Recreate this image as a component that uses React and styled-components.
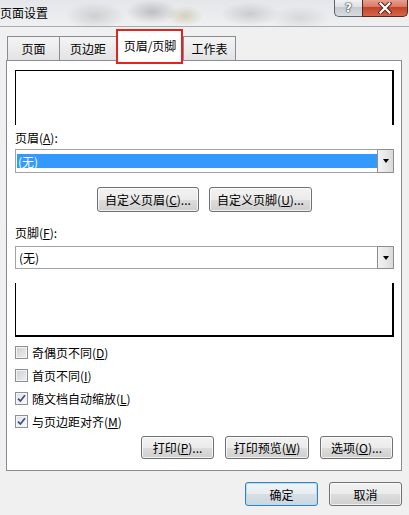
import React from 'react';
import styled, { createGlobalStyle, css } from 'styled-components';

const GlobalStyle = createGlobalStyle`
  html, body {
    margin: 0;
    padding: 0;
    background: #f0f0f0;
  }
  body {
    font-family: "Noto Sans CJK SC", "Noto Sans", sans-serif;
    font-size: 12px;
    color: #000;
    overflow: hidden;
  }
  u {
    text-decoration: underline;
    text-underline-offset: 1px;
  }
`;

const Window = styled.div`
  display: flex;
  flex-direction: column;
  width: 409px;
  height: 515px;
  overflow: hidden;
  background: #f0f0f0;
`;

const TitleBar = styled.div`
  display: flex;
  justify-content: space-between;
  align-items: flex-start;
  height: 26px;
  flex-shrink: 0;
  border-bottom: 1px solid #a7abb1;
  background:
    radial-gradient(ellipse 30px 14px at 95px 16px, rgba(120,120,120,0.25), transparent),
    radial-gradient(ellipse 26px 12px at 152px 12px, rgba(90,90,90,0.3), transparent),
    radial-gradient(ellipse 18px 10px at 185px 16px, rgba(150,120,40,0.25), transparent),
    radial-gradient(ellipse 30px 12px at 250px 14px, rgba(110,110,110,0.25), transparent),
    radial-gradient(ellipse 30px 12px at 300px 18px, rgba(130,130,130,0.2), transparent),
    linear-gradient(#e4e6e9, #eef0f2);
`;

const Title = styled.span`
  line-height: 26px;
  font-size: 12px;
  padding-left: 0;
`;

const CaptionButtons = styled.div`
  display: flex;
  margin-right: 1px;
  margin-top: -1px;
`;

const CaptionButton = styled.div`
  display: flex;
  align-items: center;
  justify-content: center;
  height: 18px;
  box-sizing: border-box;
  border: 1px solid #5d636b;
  border-top: none;
`;

const HelpButton = styled(CaptionButton)`
  width: 28px;
  border-right: none;
  border-radius: 0 0 0 5px;
  background: linear-gradient(#f3f4f5 0%, #dfe2e5 45%, #c6cbd0 50%, #d8dce0 100%);
  color: #fff;
  font-family: "DejaVu Sans", sans-serif;
  font-weight: bold;
  font-size: 12px;
  text-shadow: 0 0 1px #3b4048, 0 0 1px #3b4048, 0 0 2px #3b4048;
`;

const CloseButton = styled(CaptionButton)`
  width: 46px;
  border-color: #5b2618;
  border-radius: 0 0 5px 0;
  background: linear-gradient(#e8a596 0%, #d87a66 45%, #c3432a 50%, #d4674b 100%);
`;

const Content = styled.div`
  display: flex;
  flex-direction: column;
  padding: 3px 7px 0 6px;
`;

const TabRow = styled.div`
  display: flex;
  align-items: flex-end;
  height: 30px;
  padding-left: 1px;
`;

const Tab = styled.div`
  position: relative;
  display: flex;
  align-items: center;
  justify-content: center;
  box-sizing: border-box;
  width: ${p => p.$width}px;
  height: 24px;
  margin-right: -1px;
  border: 1px solid #898c95;
  border-bottom: none;
  background: linear-gradient(#f4f4f4, #e3e3e3);
  ${p => p.$active && css`
    height: 31px;
    margin-bottom: -1px;
    margin-left: 1px;
    margin-right: 0;
    padding-bottom: 2px;
    background: #fff;
    z-index: 1;
  `}
`;

const RedMark = styled.div`
  position: absolute;
  top: -2px;
  left: -2px;
  right: -1px;
  bottom: -3px;
  border: 2px solid #e1251d;
`;

const Panel = styled.div`
  display: flex;
  flex-direction: column;
  box-sizing: border-box;
  height: 411px;
  padding: 9px 7px 0 8px;
  border: 1px solid #898c95;
  background: #fff;
`;

const PagePreview = styled.div`
  box-sizing: border-box;
  height: ${p => p.$height}px;
  border-left: 1px solid #000;
  border-right: 2px solid #000;
  ${p => p.$edge === 'top'
    ? css`border-top: 1px solid #000;`
    : css`border-bottom: 2px solid #000;`}
  margin-top: ${p => p.$top || 0}px;
`;

const FieldLabel = styled.div`
  line-height: 16px;
  margin-top: ${p => p.$top}px;
`;

const Select = styled.div`
  display: flex;
  box-sizing: border-box;
  height: ${p => p.$height}px;
  margin-top: ${p => p.$top}px;
  border: 1px solid #a3a3a3;
  background: #fff;
`;

const SelectValue = styled.div`
  flex: 1;
  display: flex;
  align-items: center;
  padding-left: ${p => p.$selected ? 1 : 3}px;
  ${p => p.$selected && css`
    margin: 4px 0 4px 1px;
    background: #3399ff;
    color: #fff;
  `}
`;

const DropArrow = styled.div`
  display: flex;
  align-items: center;
  justify-content: center;
  box-sizing: border-box;
  width: 17px;
  margin: -1px -1px -1px 0;
  border: 1px solid #8d8d8d;
  border-radius: 1px;
  background: linear-gradient(90deg, #f3f3f3, #e6e6e6 60%, #d9d9d9);

  &::after {
    content: "";
    border-left: 3.5px solid transparent;
    border-right: 3.5px solid transparent;
    border-top: 4px solid #000;
  }
`;

const ButtonRow = styled.div`
  display: flex;
  justify-content: ${p => p.$justify || 'center'};
  gap: ${p => p.$gap}px;
  margin-top: ${p => p.$top}px;
  padding-right: ${p => p.$right || 0}px;
`;

const Button = styled.div`
  display: flex;
  align-items: center;
  justify-content: center;
  box-sizing: border-box;
  width: ${p => p.$width}px;
  height: ${p => p.$height || 24}px;
  border: 1px solid #707070;
  border-radius: 3px;
  background: linear-gradient(#f2f2f2 0%, #ebebeb 50%, #dddddd 51%, #cfcfcf 100%);
  box-shadow: inset 0 0 0 1px rgba(255,255,255,0.7);
  white-space: nowrap;
  ${p => p.$default && css`
    border-color: #3c7fb1;
    box-shadow: inset 0 0 0 1px #b5dcf2;
    background: linear-gradient(#f0f4f7 0%, #e6ecf0 50%, #d6dfe6 51%, #cbd6de 100%);
  `}
`;

const CheckList = styled.div`
  display: flex;
  flex-direction: column;
  margin-top: 4px;
`;

const CheckRow = styled.div`
  display: flex;
  align-items: center;
  gap: 4px;
  height: 23px;
`;

const CheckBox = styled.span`
  display: flex;
  align-items: center;
  justify-content: center;
  box-sizing: border-box;
  width: 13px;
  height: 13px;
  border: 1px solid #8e8f8f;
  box-shadow: inset 0 0 0 1px #f4f4f4;
  background: ${p => p.$checked
    ? 'linear-gradient(135deg, #dfe1e5, #fbfbfb)'
    : 'linear-gradient(135deg, #cdd0d5, #eeeeee)'};
`;

const Footer = styled.div`
  display: flex;
  justify-content: flex-end;
  gap: 11px;
  margin-top: 11px;
`;

const Check = ({ checked, children }) => (
  <CheckRow>
    <CheckBox $checked={checked}>
      {checked && (
        <svg width="9" height="9" viewBox="0 0 9 9">
          <path d="M1 4.6 L3.4 7 L8 1.2" fill="none" stroke="#3d4e89" strokeWidth="1.7" />
        </svg>
      )}
    </CheckBox>
    <span>{children}</span>
  </CheckRow>
);

export default function App() {
  return (
    <Window>
      <GlobalStyle />
      <TitleBar>
        <Title>页面设置</Title>
        <CaptionButtons>
          <HelpButton>?</HelpButton>
          <CloseButton>
            <svg width="14" height="12" viewBox="0 0 14 12">
              <path d="M2.5 1.5 L11.5 10.5 M11.5 1.5 L2.5 10.5" stroke="#4a1d12" strokeWidth="4" strokeLinecap="square" />
              <path d="M2.5 1.5 L11.5 10.5 M11.5 1.5 L2.5 10.5" stroke="#fff" strokeWidth="2.2" strokeLinecap="square" />
            </svg>
          </CloseButton>
        </CaptionButtons>
      </TitleBar>

      <Content>
        <TabRow>
          <Tab $width={53}>页面</Tab>
          <Tab $width={58}>页边距</Tab>
          <Tab $width={66} $active>
            页眉/页脚
            <RedMark />
          </Tab>
          <Tab $width={53}>工作表</Tab>
        </TabRow>

        <Panel>
          <PagePreview $edge="top" $height={55} />
          <FieldLabel $top={5}>页眉(<u>A</u>):</FieldLabel>
          <Select $height={24} $top={3}>
            <SelectValue $selected>(无)</SelectValue>
            <DropArrow />
          </Select>
          <ButtonRow $gap={10} $top={14}>
            <Button $width={102} $height={25}>自定义页眉(<u>C</u>)...</Button>
            <Button $width={103} $height={25}>自定义页脚(<u>U</u>)...</Button>
          </ButtonRow>
          <FieldLabel $top={13}>页脚(<u>F</u>):</FieldLabel>
          <Select $height={23} $top={5}>
            <SelectValue>(无)</SelectValue>
            <DropArrow />
          </Select>
          <PagePreview $edge="bottom" $height={54} $top={14} />
          <CheckList>
            <Check>奇偶页不同(<u>D</u>)</Check>
            <Check>首页不同(<u>I</u>)</Check>
            <Check checked>随文档自动缩放(<u>L</u>)</Check>
            <Check checked>与页边距对齐(<u>M</u>)</Check>
          </CheckList>
          <ButtonRow $justify="flex-end" $gap={11} $top={3} $right={1}>
            <Button $width={73} $height={23}>打印(<u>P</u>)...</Button>
            <Button $width={84} $height={23}>打印预览(<u>W</u>)</Button>
            <Button $width={73} $height={23}>选项(<u>O</u>)...</Button>
          </ButtonRow>
        </Panel>

        <Footer>
          <Button $width={73} $height={24} $default>确定</Button>
          <Button $width={73} $height={24}>取消</Button>
        </Footer>
      </Content>
    </Window>
  );
}
